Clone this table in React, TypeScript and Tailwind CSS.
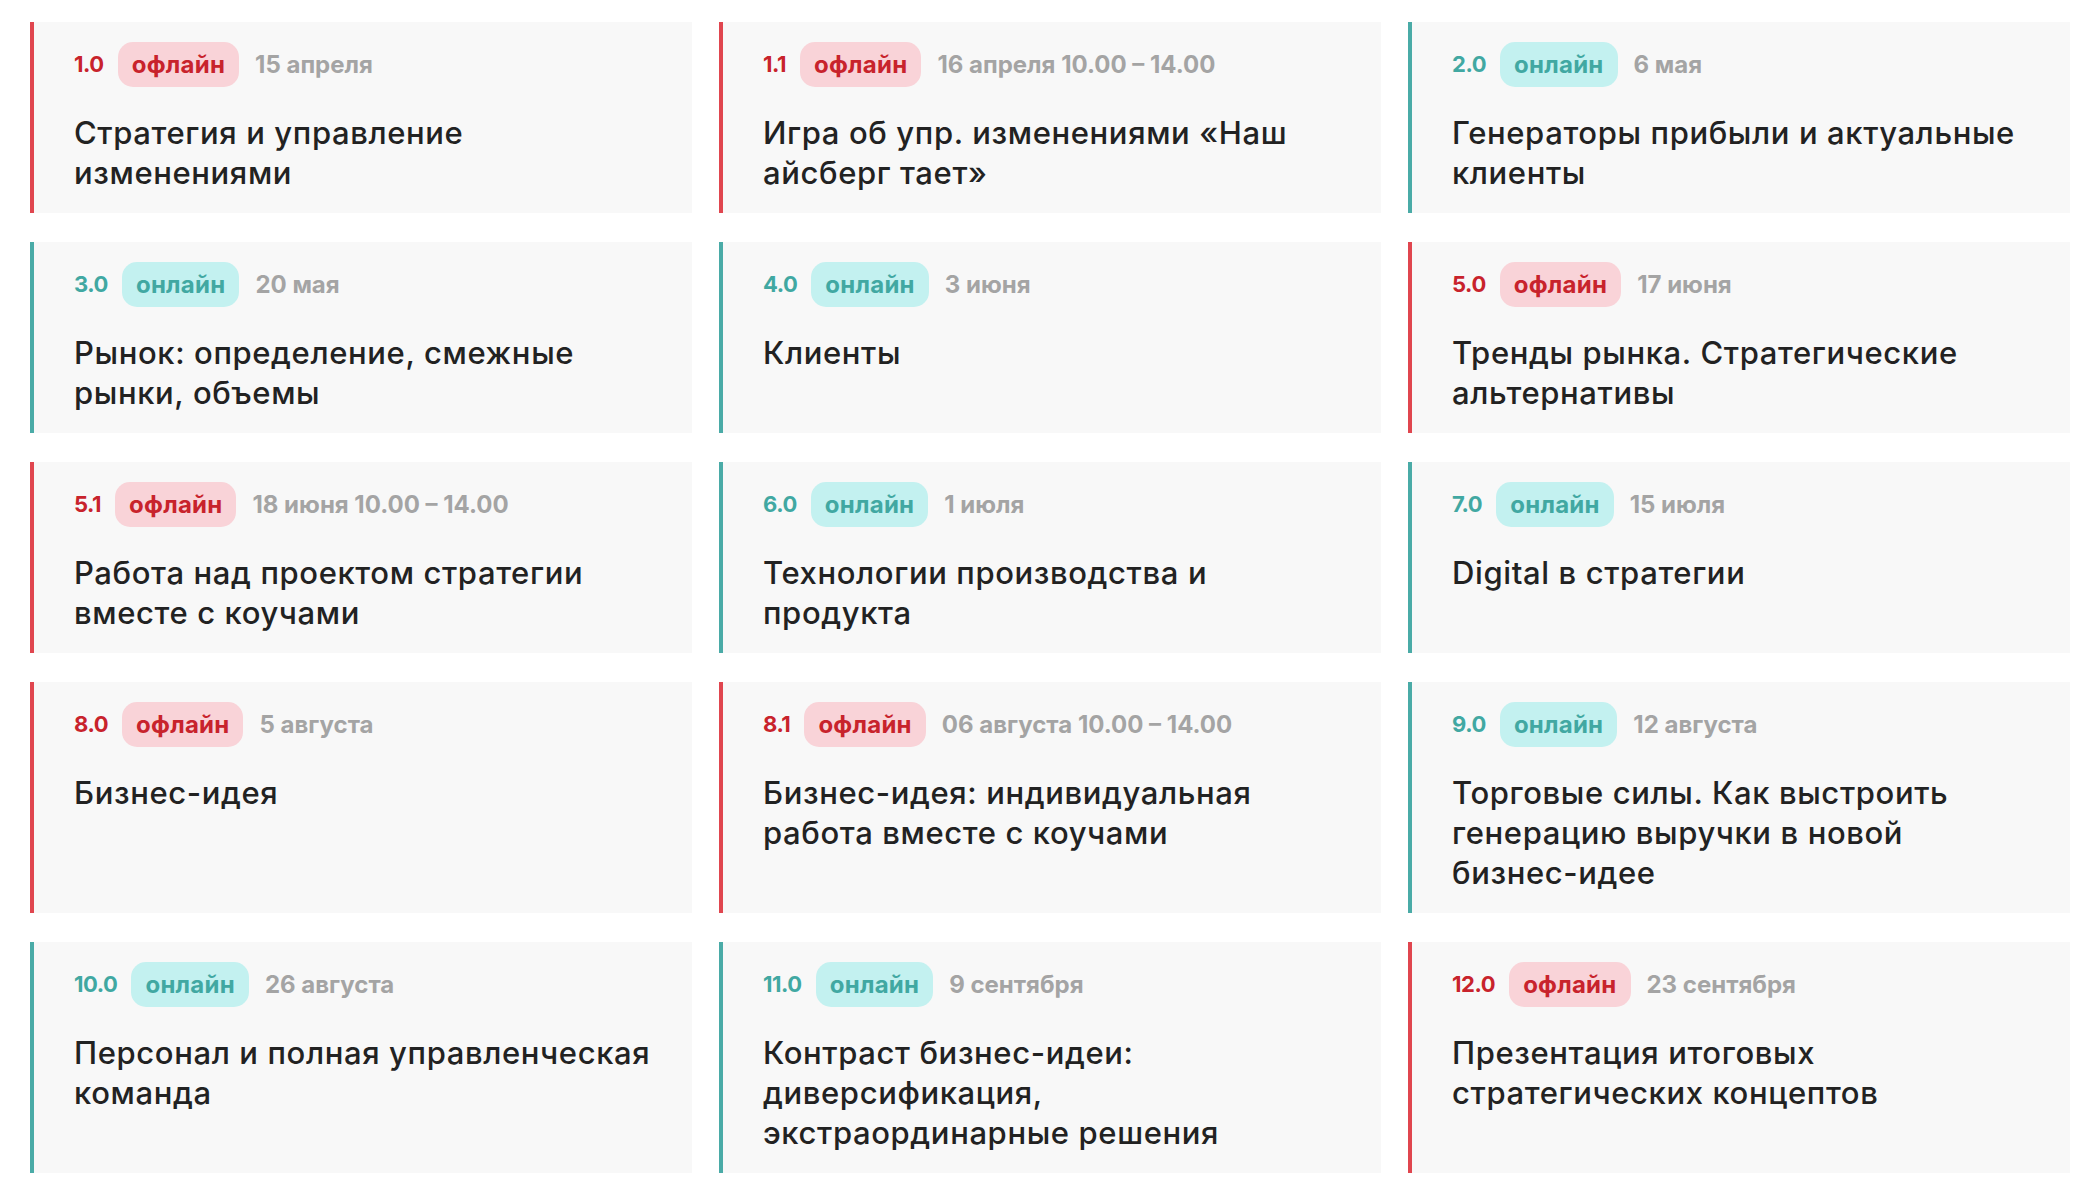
type Session = {
  num: string;
  offline: boolean;
  date: string;
  title: string[];
};

const sessions: Session[] = [
  { num: "1.0", offline: true, date: "15 апреля", title: ["Стратегия и управление", "изменениями"] },
  { num: "1.1", offline: true, date: "16 апреля 10.00 – 14.00", title: ["Игра об упр. изменениями «Наш", "айсберг тает»"] },
  { num: "2.0", offline: false, date: "6 мая", title: ["Генераторы прибыли и актуальные", "клиенты"] },
  { num: "3.0", offline: false, date: "20 мая", title: ["Рынок: определение, смежные", "рынки, объемы"] },
  { num: "4.0", offline: false, date: "3 июня", title: ["Клиенты"] },
  { num: "5.0", offline: true, date: "17 июня", title: ["Тренды рынка. Стратегические", "альтернативы"] },
  { num: "5.1", offline: true, date: "18 июня 10.00 – 14.00", title: ["Работа над проектом стратегии", "вместе с коучами"] },
  { num: "6.0", offline: false, date: "1 июля", title: ["Технологии производства и", "продукта"] },
  { num: "7.0", offline: false, date: "15 июля", title: ["Digital в стратегии"] },
  { num: "8.0", offline: true, date: "5 августа", title: ["Бизнес-идея"] },
  { num: "8.1", offline: true, date: "06 августа 10.00 – 14.00", title: ["Бизнес-идея: индивидуальная", "работа вместе с коучами"] },
  { num: "9.0", offline: false, date: "12 августа", title: ["Торговые силы. Как выстроить", "генерацию выручки в новой", "бизнес-идее"] },
  { num: "10.0", offline: false, date: "26 августа", title: ["Персонал и полная управленческая", "команда"] },
  { num: "11.0", offline: false, date: "9 сентября", title: ["Контраст бизнес-идеи:", "диверсификация,", "экстраординарные решения"] },
  { num: "12.0", offline: true, date: "23 сентября", title: ["Презентация итоговых", "стратегических концептов"] },
];

function SessionCard({ s }: { s: Session }) {
  return (
    <div
      className={
        "border-l-4 bg-[#f8f8f8] pb-5 pl-10 pr-10 pt-5 " +
        (s.offline ? "border-[#e0464f]" : "border-[#4aaba7]")
      }
    >
      {/* Number + format + date */}
      <div className="flex h-[45px] items-center font-bold">
        <span className={"text-[22px] tracking-[-0.02em] " + (s.offline ? "text-[#c8232c]" : "text-[#41a8a2]")}>
          {s.num}
        </span>
        <span
          className={
            "ml-[14px] flex h-[45px] items-center rounded-[15px] px-[14px] text-[24px] tracking-[0.01em] " +
            (s.offline ? "bg-[#f9d3d8] text-[#c8232c]" : "bg-[#c3f1f0] text-[#41a8a2]")
          }
        >
          {s.offline ? "офлайн" : "онлайн"}
        </span>
        <span className="ml-4 text-[24px] text-[#a4a4a4]">{s.date}</span>
      </div>

      {/* Title */}
      <div className="mt-[26px] text-[31px] font-medium leading-[40px] tracking-[0.02em] text-[#222222]">
        {s.title.map((line) => (
          <div key={line} className="whitespace-nowrap">
            {line}
          </div>
        ))}
      </div>
    </div>
  );
}

export default function App() {
  return (
    <div className="min-h-screen bg-white pl-[30px] pr-4 pt-[22px] font-['Inter','Noto_Sans',sans-serif]">
      <div className="grid grid-cols-[662px_662px_662px] gap-x-[27px] gap-y-[29px]">
        {sessions.map((s) => (
          <SessionCard key={s.num} s={s} />
        ))}
      </div>
    </div>
  );
}
